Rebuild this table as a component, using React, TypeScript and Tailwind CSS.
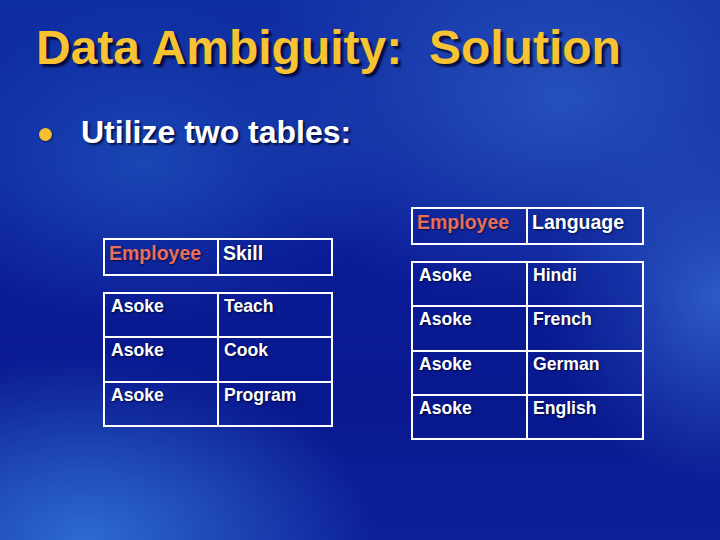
import React from 'react';

const skillRows = [
  ['Asoke', 'Teach'],
  ['Asoke', 'Cook'],
  ['Asoke', 'Program'],
];

const languageRows = [
  ['Asoke', 'Hindi'],
  ['Asoke', 'French'],
  ['Asoke', 'German'],
  ['Asoke', 'English'],
];

const shadow = '[text-shadow:1px_1px_2px_rgba(0,0,20,0.7)]';

function SlideTable({
  second,
  rows,
  width,
  firstCol,
  bodyHeight,
}: {
  second: string;
  rows: string[][];
  width: string;
  firstCol: string;
  bodyHeight: string;
}) {
  return (
    <div className={`flex flex-col gap-[16px] ${width}`}>
      {/* header box */}
      <div className={`grid ${firstCol} h-[38px] border-2 border-white bg-[#081790]/30`}>
        <div className={`border-r-2 border-white pl-[4px] pt-[2px] text-[19.5px] leading-[1.2] font-bold text-[#e86f5c] ${shadow}`}>
          Employee
        </div>
        <div className={`pl-[4px] pt-[2px] text-[19.5px] leading-[1.2] font-bold text-white ${shadow}`}>
          {second}
        </div>
      </div>
      {/* body box */}
      <div className={`flex flex-col border-2 border-white bg-[#081790]/30 ${bodyHeight}`}>
        {rows.map((r, i) => (
          <div
            key={i}
            className={`grid flex-1 ${firstCol} ${i > 0 ? 'border-t-2 border-white' : ''}`}
          >
            <div className={`border-r-2 border-white pl-[6px] pt-[1px] text-[17.6px] leading-[22px] font-bold text-white ${shadow}`}>
              {r[0]}
            </div>
            <div className={`pl-[5px] pt-[1px] text-[17.6px] leading-[22px] font-bold text-white ${shadow}`}>
              {r[1]}
            </div>
          </div>
        ))}
      </div>
    </div>
  );
}

export default function App() {
  return (
    <div className="w-[720px] h-[540px] overflow-hidden font-['Liberation_Sans',Arial,sans-serif] bg-[radial-gradient(ellipse_40%_35%_at_12%_100%,#2d6bd0_0%,transparent_100%),radial-gradient(ellipse_45%_40%_at_78%_18%,#2550bb_0%,transparent_100%),radial-gradient(ellipse_25%_35%_at_100%_55%,#2c5ac6_0%,transparent_100%),radial-gradient(ellipse_35%_30%_at_20%_30%,#1a46b4_0%,transparent_100%),linear-gradient(180deg,#0f2ea2_0%,#0b1c98_45%,#0a1990_75%,#0d2099_100%)]">
      <div className="pt-[24px] pl-[36px]">
        <h1 className="text-[48px] leading-[48px] font-bold text-[#f7c332] [text-shadow:3px_3px_2px_rgba(0,0,30,0.75)]">
          Data Ambiguity:&nbsp; Solution
        </h1>
      </div>

      <div className="mt-[44px] flex items-center pl-[39px]">
        <div className="w-[13px] h-[13px] rounded-full bg-[#f5c02e] mt-[4px] shadow-[1px_1px_2px_rgba(0,0,30,0.6)]" />
        <div className={`ml-[29px] text-[32px] leading-[32px] font-bold text-white [text-shadow:2px_2px_2px_rgba(0,0,30,0.7)]`}>
          Utilize two tables:
        </div>
      </div>

      <div className="mt-[59px] flex items-start">
        <div className="ml-[103px] mt-[31px]">
          <SlideTable
            second="Skill"
            rows={skillRows}
            width="w-[230px]"
            firstCol="grid-cols-[114px_1fr]"
            bodyHeight="h-[135px]"
          />
        </div>
        <div className="ml-[78px]">
          <SlideTable
            second="Language"
            rows={languageRows}
            width="w-[233px]"
            firstCol="grid-cols-[115px_1fr]"
            bodyHeight="h-[179px]"
          />
        </div>
      </div>
    </div>
  );
}
